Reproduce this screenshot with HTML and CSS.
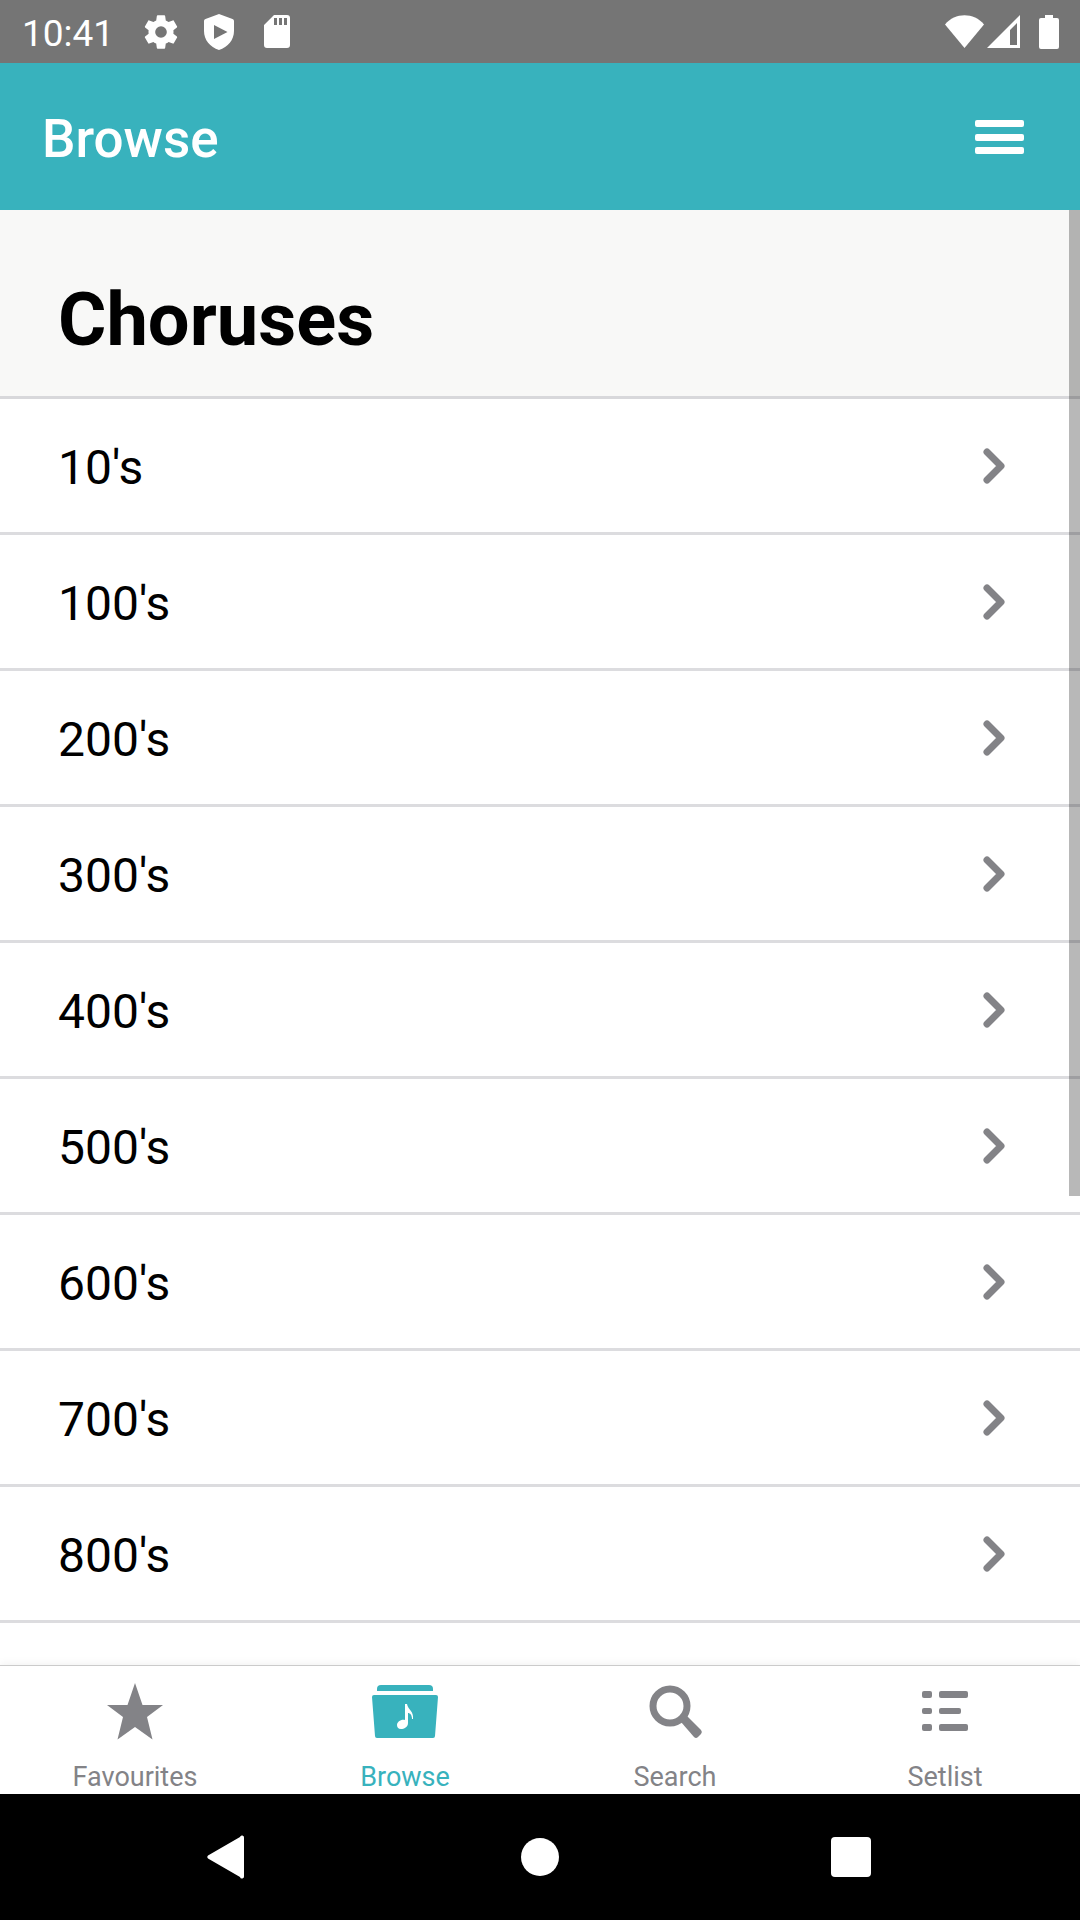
FILE: index.html
```html
<!DOCTYPE html>
<html lang="en">
<head>
  <meta charset="UTF-8" />
  <meta name="viewport" content="width=device-width, initial-scale=1.0" />
  <title>Browse</title>
  <link rel="stylesheet" href="styles.css">
</head>
<body>
  <div class="status-bar">
    <div class="status-left">
      <span class="clock">10:41</span>
      <svg width="40" height="40" viewBox="0 0 24 24"><path d="M19.43 12.98c.04-.32.07-.64.07-.98s-.03-.66-.07-.98l2.11-1.65c.19-.15.24-.42.12-.64l-2-3.46c-.12-.22-.39-.3-.61-.22l-2.49 1c-.52-.4-1.08-.73-1.69-.98l-.38-2.65C14.46 2.18 14.25 2 14 2h-4c-.25 0-.46.18-.49.42l-.38 2.65c-.61.25-1.17.59-1.69.98l-2.49-1c-.23-.09-.49 0-.61.22l-2 3.46c-.13.22-.07.49.12.64l2.11 1.65c-.04.32-.07.65-.07.98s.03.66.07.98l-2.11 1.65c-.19.15-.24.42-.12.64l2 3.46c.12.22.39.3.61.22l2.49-1c.52.4 1.08.73 1.69.98l.38 2.65c.03.24.24.42.49.42h4c.25 0 .46-.18.49-.42l.38-2.65c.61-.25 1.17-.59 1.69-.98l2.49 1c.23.09.49 0 .61-.22l2-3.46c.12-.22.07-.49-.12-.64l-2.11-1.65zM12 15.5a3.500 3.500 0 1 1 0-7 3.500 3.500 0 0 1 0 7z"/></svg>
      <svg width="40" height="40" viewBox="0 0 40 40"><path fill-rule="evenodd" d="M20 2l13.500 5a2 2 0 0 1 1.500 2v10c0 9-6 16-15 19C11 35 5 28 5 19V9a2 2 0 0 1 1.500-2zM15 13v14l13.500-7z"/></svg>
      <svg width="40" height="40" viewBox="0 0 40 40"><path fill-rule="evenodd" d="M17 3h13a3 3 0 0 1 3 3v27a3 3 0 0 1-3 3H10a3 3 0 0 1-3-3V13zM17 6v7h3V6zM22 6v7h3V6zM27 6v7h3V6z"/></svg>
    </div>
    <div class="status-right">
      <svg width="39" height="34" viewBox="0 0 39 34"><path d="M0 9.500C10-2.800 29-2.800 39 9.500L19.500 33z"/></svg>
      <svg width="34" height="34" viewBox="0 0 34 34"><path fill-rule="evenodd" d="M0 33L33 0v33zM23 15v15h7V8z"/></svg>
      <svg class="battery" width="20" height="34" viewBox="0 0 20 34"><path d="M6 0h8v3h4a2 2 0 0 1 2 2v27a2 2 0 0 1-2 2H2a2 2 0 0 1-2-2V5a2 2 0 0 1 2-2h4z"/></svg>
    </div>
  </div>

  <header>
    <h1>Browse</h1>
    <button class="menu-btn" aria-label="Menu">
      <svg width="49" height="36" viewBox="0 0 49 36">
        <rect y="1" width="49" height="7" rx="2"/>
        <rect y="15" width="49" height="7" rx="2"/>
        <rect y="28" width="49" height="7" rx="2"/>
      </svg>
    </button>
  </header>

  <main>
    <h2>Choruses</h2>
    <ul class="list">
      <li><a href="#10">10's <svg class="chevron" viewBox="0 0 24 38"><path d="M5 5l14 14L5 33"/></svg></a></li>
      <li><a href="#100">100's <svg class="chevron" viewBox="0 0 24 38"><path d="M5 5l14 14L5 33"/></svg></a></li>
      <li><a href="#200">200's <svg class="chevron" viewBox="0 0 24 38"><path d="M5 5l14 14L5 33"/></svg></a></li>
      <li><a href="#300">300's <svg class="chevron" viewBox="0 0 24 38"><path d="M5 5l14 14L5 33"/></svg></a></li>
      <li><a href="#400">400's <svg class="chevron" viewBox="0 0 24 38"><path d="M5 5l14 14L5 33"/></svg></a></li>
      <li><a href="#500">500's <svg class="chevron" viewBox="0 0 24 38"><path d="M5 5l14 14L5 33"/></svg></a></li>
      <li><a href="#600">600's <svg class="chevron" viewBox="0 0 24 38"><path d="M5 5l14 14L5 33"/></svg></a></li>
      <li><a href="#700">700's <svg class="chevron" viewBox="0 0 24 38"><path d="M5 5l14 14L5 33"/></svg></a></li>
      <li><a href="#800">800's <svg class="chevron" viewBox="0 0 24 38"><path d="M5 5l14 14L5 33"/></svg></a></li>
    </ul>
    <div class="scroll-thumb"></div>
  </main>

  <nav class="tabs">
    <a href="#favourites">
      <svg width="72" height="60" viewBox="0 0 72 60"><path d="M36 1l7.500 22H64L48 35l5.500 22.500L36 45 18.500 57.500 24 35 8 23h20.500z"/></svg>
      Favourites
    </a>
    <a href="#browse" class="active">
      <svg width="72" height="60" viewBox="0 0 72 60">
        <path d="M8 9V7a4 4 0 0 1 4-4h48a4 4 0 0 1 4 4v2z"/>
        <path d="M5 13h62a2 2 0 0 1 2 2l-3 39a2 2 0 0 1-2 2H8a2 2 0 0 1-2-2L3 15a2 2 0 0 1 2-2z"/>
        <path class="note" d="M36 22h2c1 6 7 7 6 15h-1c0-4-2-6-4-6v10c0 4-4 6-7 6s-4-2-4-4c0-3 4-6 8-5z"/>
      </svg>
      Browse
    </a>
    <a href="#search">
      <svg width="72" height="60" viewBox="0 0 72 60">
        <circle class="ring" cx="31" cy="24" r="17"/>
        <path d="M42 40l6-6 14 14a3 3 0 0 1 0 4l-3 3a3 3 0 0 1-4 0z"/>
      </svg>
      Search
    </a>
    <a href="#setlist">
      <svg width="72" height="60" viewBox="0 0 72 60">
        <rect x="13" y="9" width="10" height="7" rx="2"/><rect x="30" y="9" width="29" height="7" rx="2"/>
        <rect x="13" y="26" width="10" height="6" rx="2"/><rect x="30" y="26" width="22" height="6" rx="2"/>
        <rect x="13" y="42" width="10" height="7" rx="2"/><rect x="30" y="42" width="29" height="7" rx="2"/>
      </svg>
      Setlist
    </a>
  </nav>

  <div class="system-nav">
    <button aria-label="Back"><svg width="48" height="48" viewBox="0 0 48 48"><path d="M4 22.500L36 4a2 2 0 0 1 4 1v38a2 2 0 0 1-4 1L4 25.500a2 2 0 0 1 0-3z"/></svg></button>
    <button aria-label="Home"><svg width="48" height="48" viewBox="0 0 48 48"><circle cx="24" cy="24" r="19"/></svg></button>
    <button aria-label="Recent apps"><svg width="48" height="48" viewBox="0 0 48 48"><rect x="3" y="4" width="40" height="40" rx="4"/></svg></button>
  </div>
</body>
</html>
```

FILE: styles.css
```css
* {
  box-sizing: border-box;
}
body {
  margin: 0;
  height: 100vh;
  display: flex;
  flex-direction: column;
  overflow: hidden;
  background: #fff;
  color: #000;
  font-family: Roboto, sans-serif;
}
svg {
  display: block;
  flex: none;
  fill: currentColor;
}
button {
  padding: 0;
  border: none;
  background: none;
  color: #fff;
  cursor: pointer;
}
.status-bar {
  flex: none;
  height: 63px;
  padding: 0 21px 0 22px;
  display: flex;
  justify-content: space-between;
  align-items: center;
  background: #757575;
  color: #fff;
}
.status-left {
  display: flex;
  align-items: center;
  gap: 18px;
}
.clock {
  margin-right: 9px;
  padding-top: 4px;
  font-size: 37px;
  line-height: 40px;
}
.status-right {
  display: flex;
  align-items: center;
  gap: 3px;
}
.battery {
  margin-left: 15px;
}
header {
  flex: none;
  height: 147px;
  padding: 0 56px 0 42px;
  display: flex;
  justify-content: space-between;
  align-items: center;
  background: #38b2bd;
  color: #fff;
}
h1 {
  margin: 0;
  padding-top: 4px;
  font-size: 53px;
  line-height: 64px;
  font-weight: 500;
}
main {
  flex: 1;
  min-height: 0;
  position: relative;
  overflow: hidden;
}
h2 {
  margin: 0;
  padding: 68px 58px 34px;
  border-bottom: 3px solid #d8d8db;
  background: #f8f8f7;
  font-size: 74px;
  line-height: 84px;
  font-weight: 700;
}
.list {
  margin: 0;
  padding: 0;
  list-style: none;
}
.list a {
  height: 136px;
  padding: 4px 74px 0 58px;
  display: flex;
  justify-content: space-between;
  align-items: center;
  border-bottom: 3px solid #dcdcdf;
  color: #000;
  font-size: 48px;
  line-height: 56px;
  text-decoration: none;
}
.chevron {
  width: 24px;
  height: 38px;
  margin-bottom: 3px;
  fill: none;
  stroke: #838387;
  stroke-width: 7;
  stroke-linecap: round;
  stroke-linejoin: round;
}
.scroll-thumb {
  position: absolute;
  top: 0;
  right: 0;
  width: 11px;
  height: 67.8%;
  background: rgba(0, 0, 0, 0.28);
}
.tabs {
  flex: none;
  height: 129px;
  display: flex;
  position: relative;
  border-top: 1px solid #cbcbcb;
  box-shadow: 0 -2px 8px rgba(0, 0, 0, 0.05);
  background: #fff;
}
.tabs a {
  flex: 1;
  padding-top: 16px;
  display: flex;
  flex-direction: column;
  align-items: center;
  gap: 19px;
  color: #838387;
  font-size: 27px;
  line-height: 32px;
  text-decoration: none;
}
.tabs .active {
  color: #38b2bd;
}
.note {
  fill: #fff;
}
.ring {
  fill: none;
  stroke: currentColor;
  stroke-width: 7;
}
.system-nav {
  flex: none;
  height: 126px;
  display: flex;
  justify-content: center;
  align-items: center;
  gap: 232px;
  background: #000;
}
.system-nav button {
  width: 80px;
  height: 80px;
  display: flex;
  justify-content: center;
  align-items: center;
}
```
